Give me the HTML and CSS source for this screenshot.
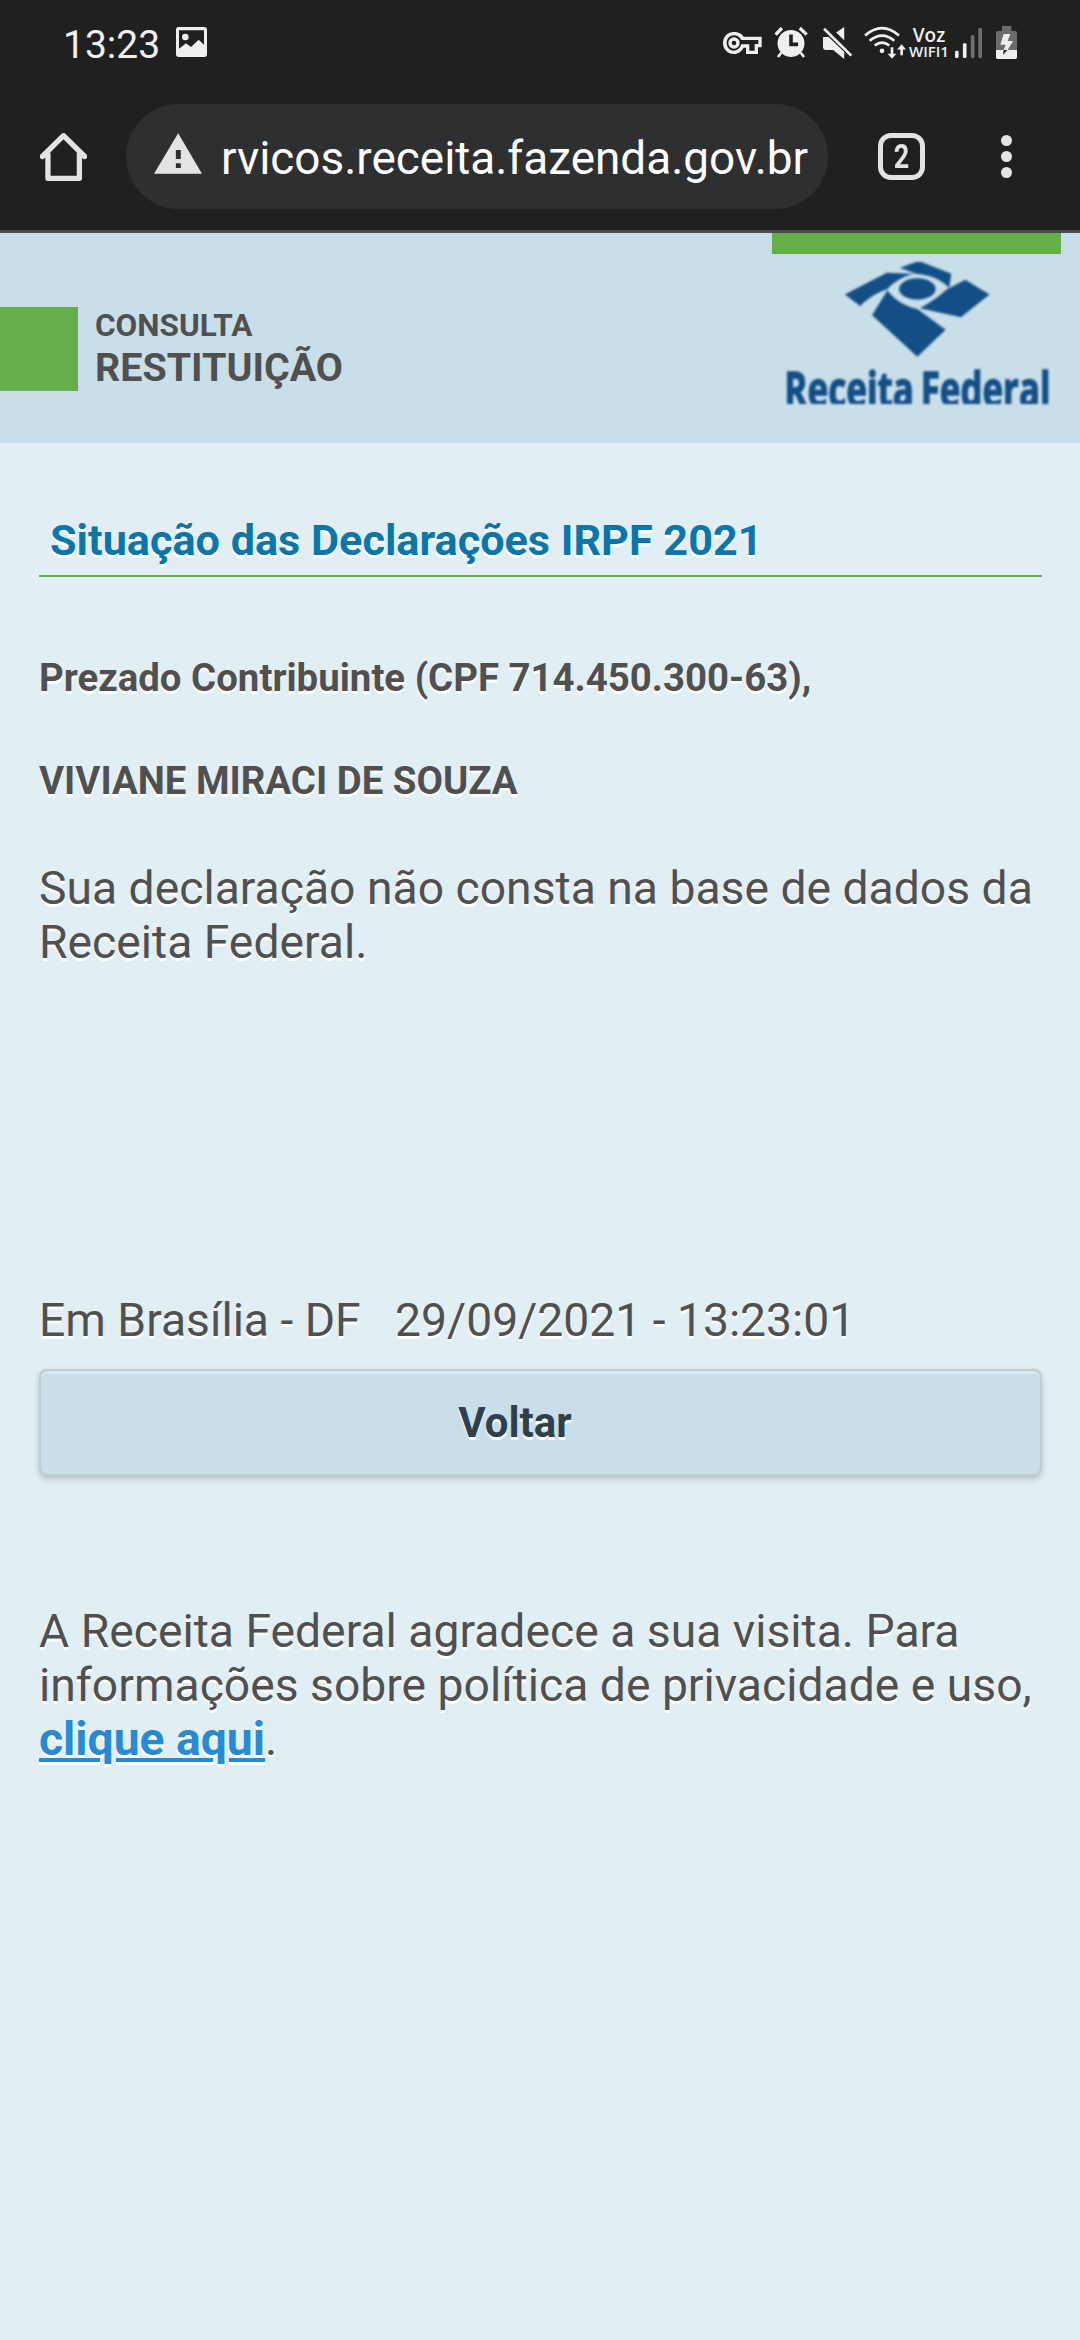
FILE: index.html
```html
<!DOCTYPE html>
<html lang="pt-BR">
<head>
<meta charset="utf-8">
<title>Consulta Restituição</title>
<link rel="stylesheet" href="styles.css">
</head>
<body>
<div class="status">
  <span class="clock">13:23</span>
  <svg class="s-pic" viewBox="528 81 93 90"><path fill-rule="evenodd" d="M536 81H613Q621 81 621 89V163Q621 171 613 171H536Q528 171 528 163V89Q528 81 536 81ZM537 91V146L558 130L573 141L596 119L612 134V91Z"/><circle cx="556" cy="111" r="10"/></svg>
  <div class="s-right">
    <svg class="s-key" viewBox="70 96 117 66"><path fill-rule="evenodd" d="M103 96C120 96 128 104 132 110H186V142H175V162H139V143H132C126 154 116 162 103 162C84 162 70 148 70 129S84 96 103 96ZM103 106C90 106 81 116 81 129S90 152 103 152C114 152 121 144 125 133H149V152H165V132H176V120H125C120 111 113 106 103 106Z"/><path fill-rule="evenodd" d="M103 112A17 17 0 1 0 103 146A17 17 0 1 0 103 112ZM103 122A7 7 0 1 1 103 136A7 7 0 1 1 103 122Z"/></svg>
    <svg class="s-alarm" viewBox="222 80 101 94"><path d="M243 158L233 171M302 158L312 171" class="ln8"/><path d="M245 83L226 103M299 83L320 103" class="ln10"/><path fill-rule="evenodd" d="M272 89A41 41 0 1 0 273 89ZM267 103H278V127H294V138H267Z"/></svg>
    <svg class="s-mute" viewBox="368 80 86 95"><path d="M431 80V119L407 96ZM368 110H385L431 154V175L398 148H375Q368 148 368 141Z"/><path d="M371 85L452 165" class="ln8"/></svg>
    <svg class="s-wifi" viewBox="490 77 126 98"><path class="ln8" d="M493 105Q544 61 595 105M507 121Q544 90 581 121M522 135Q544 118 566 135"/><circle cx="544" cy="151" r="7"/><path d="M570 140H578V160H587L574 175L561 160H570ZM599 164H607V147H616L603 131L589 147H599Z"/></svg>
    <div class="voz"><span class="v1">Voz</span><span class="v2">WIFI1</span></div>
    <svg class="s-signal" viewBox="764 84 82 91"><rect x="764" y="153" width="11" height="22" rx="4"/><rect x="788" y="130" width="11" height="45" rx="4"/><g fill="#6f6f6f"><rect x="812" y="106" width="11" height="69" rx="4"/><rect x="835" y="84" width="11" height="91" rx="4"/></g></svg>
    <svg class="s-battery" viewBox="888 78 63 99"><path fill="#6c6c6c" d="M906 78H934V93H946Q951 93 951 98V150H888V98Q888 93 893 93H906Z"/><path d="M888 150H951V172Q951 177 946 177H893Q888 177 888 172Z"/><path d="M911 102H931L923 123H939L923 150H911L917 134H901Z"/><path fill="#202020" d="M911 150H922L909 165Z"/></svg>
  </div>
</div>
<div class="toolbar">
  <svg class="home" viewBox="119 398 142 145"><path d="M126 469L190 406L254 469M143 462V535H238V462" fill="none" stroke="#e3e3e3" stroke-width="16" stroke-linecap="round" stroke-linejoin="round"/></svg>
  <div class="omnibox">
    <svg class="warn" viewBox="461 399 145 123"><path fill-rule="evenodd" d="M534 399L606 522H461ZM527 450V477H542V450ZM527 490V504H542V490Z"/></svg>
    <span class="url">rvicos.receita.fazenda.gov.br</span>
  </div>
  <div class="tabs"><span>2</span></div>
  <div class="menu"><i></i><i></i><i></i></div>
</div>
<header class="header">
  <div class="brand-block"></div>
  <h1 class="brand"><span class="brand-small">CONSULTA</span><span class="brand-big">RESTITUIÇÃO</span></h1>
  <div class="agency">
    <svg class="logo" viewBox="108 110 789 427">
      <g fill="#134f86">
        <path d="M449 128L500 109H512L604 145L598 188C573 164 545 149 500 146L468 134Z"/>
        <path d="M284 208L410 142L494 146C460 151 430 171 410 193C378 203 353 221 330 242Z"/>
        <path d="M510 249C540 233 566 215 590 193L646 163L719 208L633 276Z"/>
        <path d="M412 195C430 222 465 244 502 251L587 314L502 395L366 270Z"/>
        <ellipse cx="502" cy="191" rx="55" ry="32"/>
        <text class="logo-text" x="102" y="546" textLength="390" lengthAdjust="spacingAndGlyphs">Receita</text>
        <text class="logo-text" x="512" y="546" textLength="391" lengthAdjust="spacingAndGlyphs">Federal</text>
      </g>
    </svg>
  </div>
</header>
<main class="content">
  <h2 class="title">Situação das Declarações IRPF 2021</h2>
  <p class="strong greet">Prezado Contribuinte (CPF 714.450.300-63),</p>
  <p class="strong name">VIVIANE MIRACI DE SOUZA</p>
  <p class="message">Sua declaração não consta na base de dados da Receita Federal.</p>
  <p class="stamp">Em Brasília - DF &nbsp; 29/09/2021 - 13:23:01</p>
  <button class="back" type="button">Voltar</button>
  <p class="thanks">A Receita Federal agradece a sua visita. Para informações sobre política de privacidade e uso, <a href="#">clique aqui</a>.</p>
</main>
</body>
</html>
```
FILE: styles.css
```css
* { box-sizing: border-box; }
body {
  margin: 0;
  width: 1080px;
  min-height: 2340px;
  background: #e1eff5;
  font-family: Roboto, "Liberation Sans", sans-serif;
  color: #505050;
}
h1, h2, p { margin: 0; }
svg { display: block; flex: none; fill: #efefef; }

/* system status bar */
.status {
  height: 90px;
  background: #202020;
  display: flex;
  align-items: flex-start;
  padding-left: 63px;
  color: #efefef;
}
.clock { width: 113px; margin-top: 21px; font-size: 39px; line-height: 48px; }
.s-pic { width: 31px; height: 30px; margin-top: 27px; }
.s-right { display: flex; align-items: flex-start; margin-left: auto; padding-right: 63px; }
.ln8, .ln10 { fill: none; stroke: #efefef; stroke-width: 8; }
.ln10 { stroke-width: 10; }
.s-key { width: 39px; height: 22px; margin-top: 32px; }
.s-alarm { width: 34px; height: 31px; margin: 27px 0 0 12px; }
.s-mute { width: 29px; height: 32px; margin: 27px 0 0 15px; }
.s-wifi { width: 42px; height: 33px; margin: 26px 0 0 12px; }
.voz {
  width: 40px;
  margin: 26px 0 0 3px;
  display: flex;
  flex-direction: column;
  align-items: center;
  font-family: "Open Sans", sans-serif;
  font-weight: 600;
}
.v1 { font-size: 19px; line-height: 19px; }
.v2 { font-size: 15px; line-height: 13px; }
.s-signal { width: 27px; height: 30px; margin: 28px 0 0 6px; }
.s-battery { width: 21px; height: 33px; margin: 26px 0 0 14px; }

/* browser toolbar */
.toolbar {
  height: 143px;
  background: #202020;
  border-bottom: 3px solid #4b4b4b;
  display: flex;
  align-items: center;
  padding: 0 0 7px 40px;
}
.home { width: 47px; height: 48px; }
.omnibox {
  width: 702px;
  height: 105px;
  margin-left: 39px;
  border-radius: 53px;
  background: #2e2f31;
  display: flex;
  align-items: center;
  padding-left: 28px;
}
.warn { width: 48px; height: 41px; margin-top: -6px; fill: #e3e3e3; }
.url { margin: 2px 0 0 19px; font-size: 45.9px; color: #fff; white-space: nowrap; }
.tabs {
  width: 47px;
  height: 47px;
  margin-left: 50px;
  border: 5px solid #e3e3e3;
  border-radius: 13px;
  display: flex;
  align-items: center;
  justify-content: center;
  color: #e3e3e3;
  font-size: 33px;
  font-weight: 700;
}
.tabs span { transform: scaleX(.82); }
.menu { display: flex; flex-direction: column; gap: 5px; margin-left: 76px; }
.menu i { width: 11px; height: 11px; border-radius: 50%; background: #e3e3e3; }

/* page header */
.header {
  height: 210px;
  background: #c8dee9;
  display: flex;
  align-items: flex-start;
}
.brand-block { width: 78px; height: 84px; margin-top: 74px; background: #64af4a; }
.brand { display: flex; flex-direction: column; margin: 74px 0 0 17px; }
.brand-small { font-size: 31.5px; line-height: 38px; }
.brand-big { font-size: 39.4px; line-height: 46px; }
.agency {
  width: 289px;
  margin: 0 19px 0 auto;
  border-top: 21px solid #64af4a;
  padding: 8px 0 0 14px;
}
.logo { width: 263px; height: 142px; filter: blur(.8px); }
.logo-text {
  font-family: "Open Sans", sans-serif;
  font-weight: 700;
  font-size: 148px;
  stroke: #134f86;
  stroke-width: 4;
}

/* page content */
.content { padding: 73px 38px 0 39px; text-shadow: 0 3px 0 #fff; font-size: 46.25px; line-height: 54px; }
.title {
  height: 61px;
  padding-left: 11px;
  border-bottom: 2px solid #64af4a;
  color: #0b76a8;
  font-size: 43.2px;
  line-height: 49px;
}
.strong { font-size: 38.4px; line-height: 46px; font-weight: 700; }
.greet { margin-top: 78px; }
.name { margin-top: 57px; }
.message { margin-top: 57px; }
.stamp { margin-top: 324px; }
.back {
  display: block;
  width: 1003px;
  height: 107px;
  margin-top: 22px;
  padding: 0 51px 0 0;
  border: 2px solid #c5cacd;
  border-radius: 8px;
  background: #c8dee9;
  box-shadow: inset 0 3px 0 rgba(255,255,255,.3), 0 3px 6px rgba(0,0,0,.2);
  color: #2f404a;
  font: 700 42px Roboto, sans-serif;
  text-shadow: 0 3px 0 #fff;
}
.thanks { margin-top: 128px; }
.thanks a { color: #268bd2; font-weight: 700; }
```
